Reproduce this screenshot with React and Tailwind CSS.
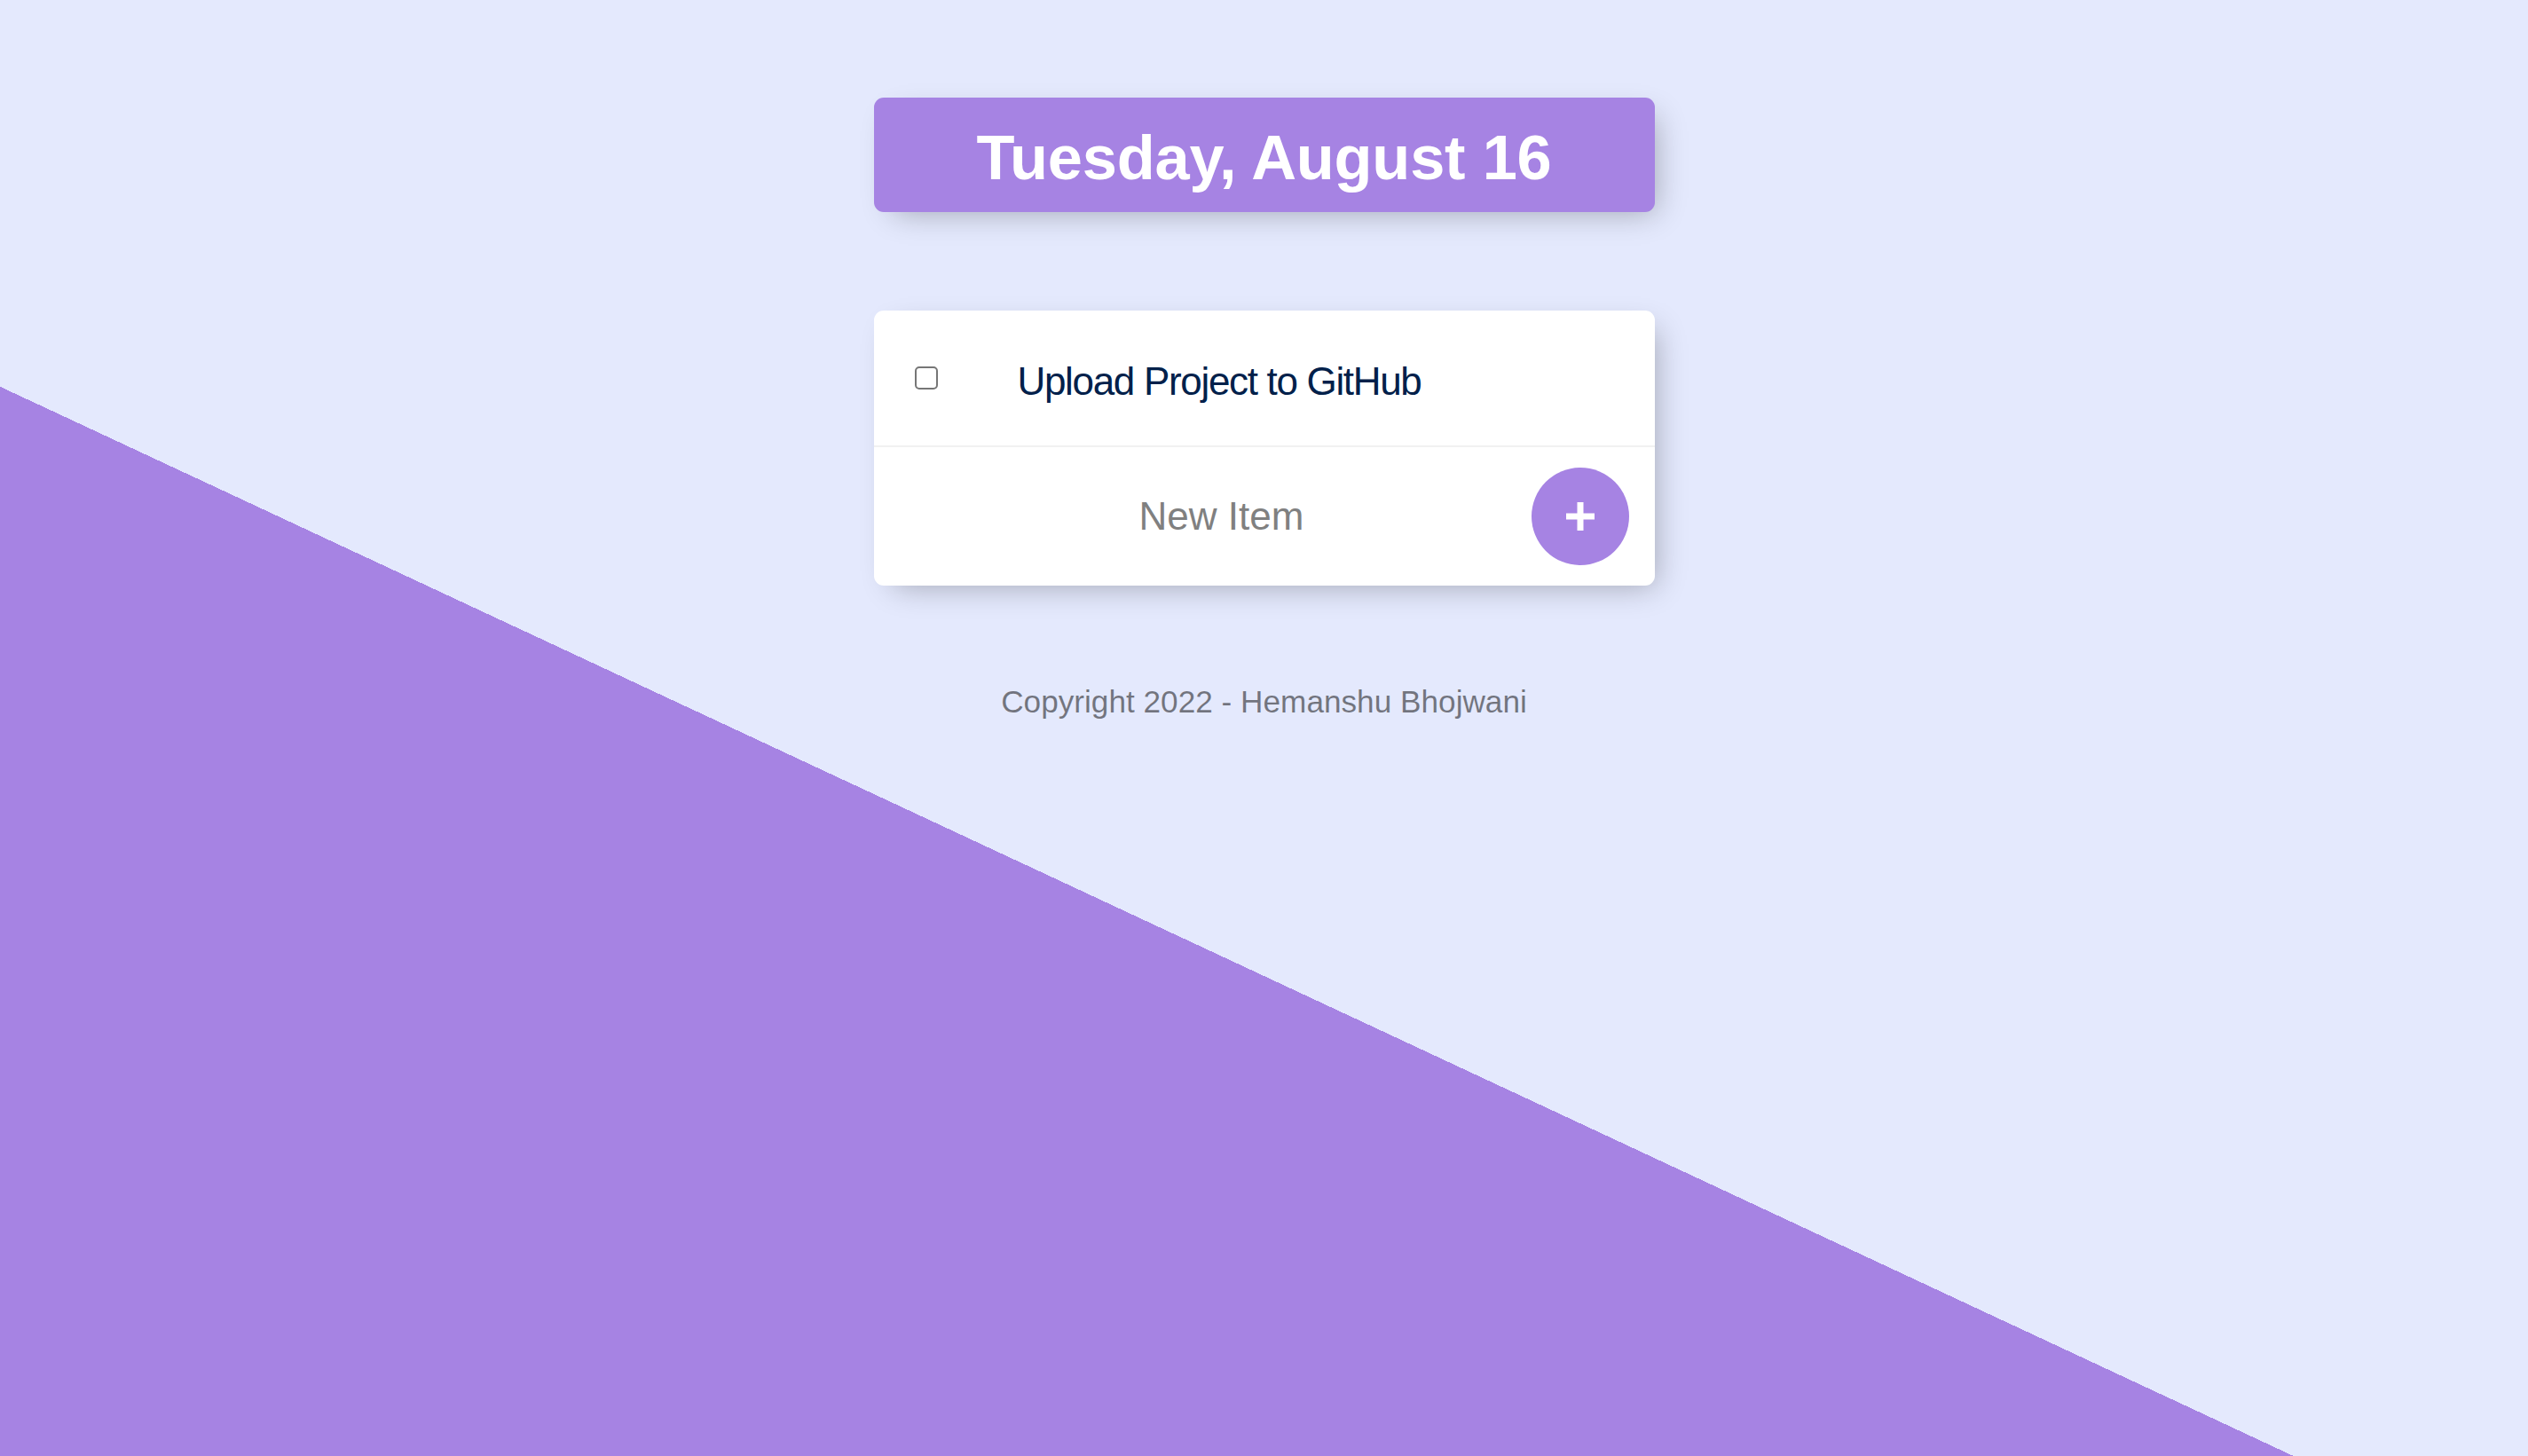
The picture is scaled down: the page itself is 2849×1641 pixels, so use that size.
import { useState } from "react";

const font = { fontFamily: '"Liberation Sans", Arial, sans-serif' };

export default function App() {
	const [items, setItems] = useState([{ name: "Upload Project to GitHub", done: false }]);
	const [newItem, setNewItem] = useState("");

	const addItem = (e) => {
		e.preventDefault();
		if (!newItem.trim()) return;
		setItems([...items, { name: newItem, done: false }]);
		setNewItem("");
	};

	return (
		<div
			style={font}
			className="h-screen overflow-hidden bg-[#E4E9FD] bg-[linear-gradient(25deg,#A683E3_50%,#E4E9FD_50%)] bg-no-repeat bg-[length:100%_2200px]"
		>
			<div className="mx-auto w-[880px] pt-[110px]">
				<div className="rounded-[11px] bg-[#A683E3] pt-[25px] pb-[19px] text-center shadow-[11px_11px_33px_-11px_rgba(0,0,0,0.3)]">
					<h1 className="text-[70.4px] leading-[85px] font-bold tracking-[-0.003em] text-white">
						Tuesday, August 16
					</h1>
				</div>

				<div className="mt-[111px] rounded-[11px] bg-white shadow-[11px_11px_33px_-11px_rgba(0,0,0,0.3)]">
					{items.map((item, idx) => (
						<div key={idx} className="flex h-[154px] items-center border-b-[2px] border-[#F1F1F1]">
							<input
								type="checkbox"
								checked={item.done}
								onChange={() => {
									const next = [...items];
									next[idx].done = !next[idx].done;
									setItems(next);
								}}
								className="ml-[46px] h-[26px] w-[26px] shrink-0 appearance-none rounded-[5px] border-2 border-[#767676] bg-white checked:bg-[#A683E3]"
							/>
							<p
								className={`ml-[90px] mt-[7px] text-[44px] tracking-[-0.03em] text-[#00204a] ${
									item.done ? "line-through decoration-[#A683E3]" : ""
								}`}
							>
								{item.name}
							</p>
						</div>
					))}
					<form onSubmit={addItem} className="flex h-[156px] items-center pl-[53px]">
						<input
							type="text"
							value={newItem}
							onChange={(e) => setNewItem(e.target.value)}
							placeholder="New Item"
							autoComplete="off"
							className="h-[132px] w-[678px] border-0 text-center text-[44px] text-[#00204a] outline-none placeholder:text-[#808080]"
						/>
						<button
							type="submit"
							className="ml-[10px] flex h-[110px] w-[110px] shrink-0 items-center justify-center rounded-full bg-[#A683E3]"
						>
							<svg width="32" height="32" viewBox="0 0 32 32" fill="none">
								<path d="M16 0v32M0 16h32" stroke="white" strokeWidth="7" />
							</svg>
						</button>
					</form>
				</div>

				<footer className="mt-[105px] text-center text-[35.2px] text-black/50">
					Copyright 2022 - Hemanshu Bhojwani
				</footer>
			</div>
		</div>
	);
}
